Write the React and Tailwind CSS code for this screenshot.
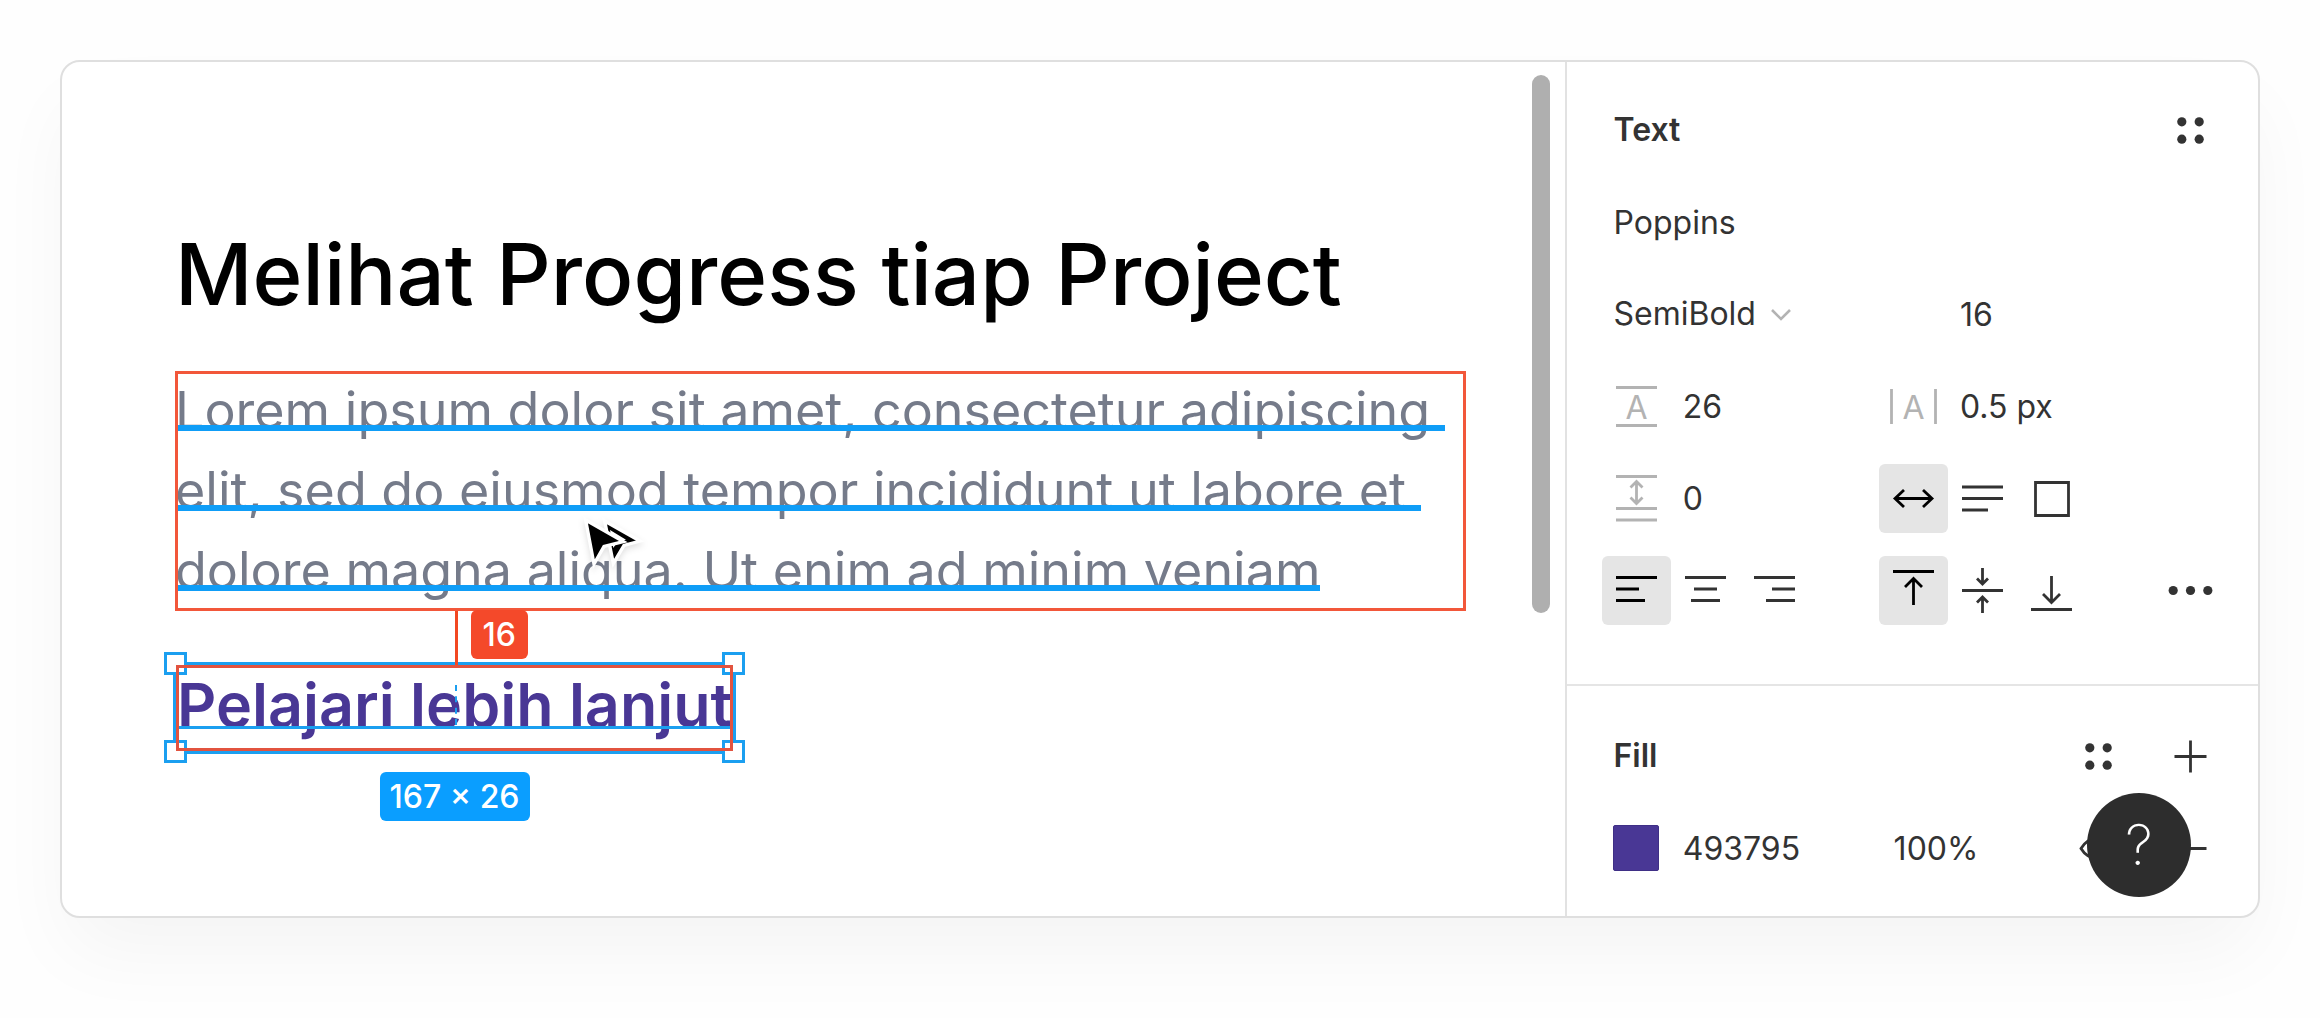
const lines = [
  'Lorem ipsum dolor sit amet, consectetur adipiscing ',
  'elit, sed do eiusmod tempor incididunt ut labore et ',
  'dolore magna aliqua. Ut enim ad minim veniam',
];

const strokes = {
  alignLeft: 'M14 21.5H55M14 33H37M14 44.5H43',
  alignCenter: 'M14 21.5H55M23 33H46M20 44.5H49',
  alignRight: 'M14 21.5H55M32 33H55M26 44.5H55',
  autoWidth: 'M16 34.5H53M25 26L16 34.5L25 43M44 26L53 34.5L44 43',
  autoHeight: 'M14 23H55M14 34.5H55M14 46H40',
  fixedSize: 'M18.5 18.5H51.5V51.5H18.5Z',
  top: 'M14 15.5H55M34.5 49V22.5M26 31L34.5 22.5L43 31',
  middle: 'M14 34.5H55M34.5 12V28M29 22.5L34.5 28L40 22.5M34.5 57V41M29 46.5L34.5 41L40 46.5',
  bottom: 'M14 53.5H55M34.5 20V46.5M26 38L34.5 46.5L43 38',
  plus: 'M18.5 34.5H50.5M34.5 18.5V50.5',
  minus: 'M18.5 34.5H50.5',
  lineHeight: 'M14 15.5H55M14 53.5H55',
  letterSpacing: 'M12.5 17V52M56.5 17V52',
  paragraphSpacing: 'M14 12.5H55M14 44.5H55M14 56H55M34.5 18V39M28.5 23.5L34.5 17.5L40.5 23.5M28.5 33.5L34.5 39.5L40.5 33.5',
};

function Icon({ name, letter }) {
  return (
    <svg viewBox="0 0 69 69" className="size-[69px] shrink-0" fill="none" stroke="currentColor" strokeWidth="2.8" aria-hidden="true">
      <path d={strokes[name]} />
      {letter && (
        <text x="34.5" y="46.5" textAnchor="middle" fill="currentColor" stroke="none" className="font-['Inter',sans-serif] text-[32px] font-normal">
          {letter}
        </text>
      )}
    </svg>
  );
}

function Dots({ points }) {
  return (
    <svg viewBox="0 0 69 69" className="size-[69px] shrink-0" fill="currentColor" aria-hidden="true">
      {points.map(([x, y]) => (
        <circle key={`${x}-${y}`} cx={x} cy={y} r="4.6" />
      ))}
    </svg>
  );
}

const gridDots = [[25.8, 25.8], [43.2, 25.8], [25.8, 43.2], [43.2, 43.2]];
const moreDots = [[17.2, 34.5], [34.5, 34.5], [51.8, 34.5]];

function IconButton({ label, active, className = '', children }) {
  return (
    <button
      type="button"
      aria-label={label}
      aria-pressed={active}
      className={`flex h-[69px] items-center justify-center rounded-md ${active ? 'bg-[#e5e5e5] text-black' : 'text-[#333333]'} ${className}`}
    >
      {children}
    </button>
  );
}

function Row({ children }) {
  return <div className="grid h-[92px] grid-cols-9 items-center">{children}</div>;
}

function Field({ label, value }) {
  return <input aria-label={label} defaultValue={value} className="h-12 w-full min-w-0 bg-transparent px-1 outline-none" />;
}

function Handle({ className }) {
  return <span className={`absolute size-[23px] border-[3px] border-[#1b9ff0] bg-white ${className}`} />;
}

function Cursor() {
  return (
    <svg viewBox="0 0 300 300" className="pointer-events-none absolute top-[428px] left-[498px] size-[100px] drop-shadow-md" aria-hidden="true">
      <path d="M134 93L240 153L192 166L160 220Z" fill="#000" stroke="#fff" strokeWidth="10" />
      <path d="M150 120L198 149L172 155L160 174Z" fill="#fff" />
      <path d="M77 90L190 155L132 169L102 222Z" fill="#000" stroke="#fff" strokeWidth="10" />
    </svg>
  );
}

function Canvas() {
  return (
    <main className="relative pt-[163px] pr-[99px] pl-[113px]">
      <h1 className="text-[85px] leading-[100px] font-medium whitespace-nowrap text-black">Melihat Progress tiap Project</h1>

      <div className="relative mt-[46px] text-[52px] leading-[80px] text-[#757b8a]">
        {lines.map((line) => (
          <div key={line}>
            <span className="relative inline-block whitespace-pre">
              {line}
              <span className="absolute inset-x-0 top-[54px] h-1.5 bg-[#0f9df7]" />
            </span>
          </div>
        ))}
        <span className="pointer-events-none absolute inset-0 border-[3px] border-[#f2573a]" />
      </div>

      <div className="relative mt-[51px] -ml-0.5 w-fit border-[3px] border-[#1b9ff0] px-px pb-1.5">
        <a href="#pelajari" className="relative block text-[61px] leading-[80px] font-semibold whitespace-nowrap text-[#493795]">
          Pelajari lebih lanjut
          <span className="absolute inset-x-0 top-[61px] h-[3px] bg-[#1b9ff0]" />
        </a>
        <span className="absolute top-5 left-1/2 h-10 border-l-2 border-dashed border-[#1b9ff0]" />
        <Handle className="-top-[13px] -left-3" />
        <Handle className="-top-[13px] -right-3" />
        <Handle className="-bottom-3 -left-3" />
        <Handle className="-right-3 -bottom-3" />
        <span className="pointer-events-none absolute inset-0 border-[3px] border-[#e2533f]" />
        <span className="absolute -top-[54px] left-1/2 h-[54px] w-[3px] bg-[#f24822]" />
        <span className="absolute -top-[55px] left-1/2 ml-4 flex h-[49px] items-center rounded-md bg-[#f4492a] px-3 text-[32px] leading-none font-medium text-white">
          16
        </span>
        <span className="absolute top-[107px] left-1/2 flex h-[49px] -translate-x-1/2 items-center rounded-md bg-[#0a9eff] px-2.5 text-[32px] leading-none font-medium whitespace-nowrap text-white">
          167 × 26
        </span>
      </div>

      <Cursor />
      <span className="absolute top-[13px] right-[15px] h-[538px] w-[18px] rounded-full bg-[#afafaf]" />
    </main>
  );
}

function TextSection() {
  return (
    <section className="border-b-2 border-[#e5e5e5] pt-[22px] pr-[33px] pb-12 pl-[35px]">
      <Row>
        <h2 className="col-span-8 pl-3 font-semibold">Text</h2>
        <IconButton label="Text styles"><Dots points={gridDots} /></IconButton>
      </Row>
      <Row>
        <div className="col-span-9 pl-2"><Field label="Font family" value="Poppins" /></div>
      </Row>
      <Row>
        <div className="relative col-span-3 flex items-center pl-2">
          <select aria-label="Font weight" defaultValue="SemiBold" className="h-12 w-full appearance-none bg-transparent px-1 outline-none">
            <option>SemiBold</option>
          </select>
          <svg viewBox="0 0 24 16" className="pointer-events-none absolute right-4 h-4 w-6 text-[#b3b3b3]" fill="none" stroke="currentColor" strokeWidth="2.6" aria-hidden="true">
            <path d="M3 4L12 13L21 4" />
          </svg>
        </div>
        <div className="col-span-3 col-start-6 pl-2"><Field label="Font size" value="16" /></div>
      </Row>
      <Row>
        <span className="flex justify-center text-[#b3b3b3]"><Icon name="lineHeight" letter="A" /></span>
        <div className="col-span-3 pl-2"><Field label="Line height" value="26" /></div>
        <span className="flex justify-center text-[#b3b3b3]"><Icon name="letterSpacing" letter="A" /></span>
        <div className="col-span-3 pl-2"><Field label="Letter spacing" value="0.5 px" /></div>
      </Row>
      <Row>
        <span className="flex justify-center text-[#b3b3b3]"><Icon name="paragraphSpacing" /></span>
        <div className="col-span-3 pl-2"><Field label="Paragraph spacing" value="0" /></div>
        <IconButton label="Auto width" active><Icon name="autoWidth" /></IconButton>
        <IconButton label="Auto height"><Icon name="autoHeight" /></IconButton>
        <IconButton label="Fixed size"><Icon name="fixedSize" /></IconButton>
      </Row>
      <Row>
        <IconButton label="Align left" active><Icon name="alignLeft" /></IconButton>
        <IconButton label="Align center"><Icon name="alignCenter" /></IconButton>
        <IconButton label="Align right"><Icon name="alignRight" /></IconButton>
        <IconButton label="Align top" active className="col-start-5"><Icon name="top" /></IconButton>
        <IconButton label="Align middle"><Icon name="middle" /></IconButton>
        <IconButton label="Align bottom"><Icon name="bottom" /></IconButton>
        <IconButton label="More options" className="col-start-9"><Dots points={moreDots} /></IconButton>
      </Row>
    </section>
  );
}

function FillSection() {
  return (
    <section className="relative pt-6 pr-[33px] pb-[22px] pl-[35px]">
      <Row>
        <h2 className="col-span-6 pl-3 font-semibold">Fill</h2>
        <div className="col-span-3 flex justify-end gap-[23px]">
          <IconButton label="Fill styles"><Dots points={gridDots} /></IconButton>
          <IconButton label="Add fill"><Icon name="plus" /></IconButton>
        </div>
      </Row>
      <Row>
        <button type="button" aria-label="Fill color" className="size-[46px] justify-self-center rounded-xs border border-[#3f2f86] bg-[#493795]" />
        <div className="col-span-3 pl-2"><Field label="Fill color hex" value="493795" /></div>
        <div className="col-span-2 pl-[11px]"><Field label="Fill opacity" value="100%" /></div>
        <div className="col-span-2 col-start-8 flex justify-end gap-[23px]">
          <IconButton label="Hide fill">
            <svg viewBox="0 0 69 69" className="size-[69px] shrink-0" fill="none" stroke="currentColor" strokeWidth="2.8" aria-hidden="true">
              <path d="M17 34.5C25 21 44 21 52 34.5C44 48 25 48 17 34.5Z" />
              <circle cx="34.5" cy="34.5" r="5" />
            </svg>
          </IconButton>
          <IconButton label="Remove fill"><Icon name="minus" /></IconButton>
        </div>
      </Row>
      <button
        type="button"
        aria-label="Help"
        className="absolute right-[67px] bottom-[19px] flex size-[104px] items-center justify-center rounded-full bg-[#2d2d2d] text-[56px] leading-none font-extralight text-white"
      >
        ?
      </button>
    </section>
  );
}

export default function App() {
  return (
    <div className="min-h-screen bg-[#fefefe] p-[60px] font-['Inter',sans-serif]">
      <div className="grid grid-cols-[13fr_6fr] rounded-[20px] border-2 border-[#dfdfdf] bg-white shadow-[0_40px_80px_-8px_rgba(0,0,0,0.045)]">
        <Canvas />
        <aside className="border-l-2 border-[#e2e2e2] text-[32px] leading-10 text-[#333333]">
          <TextSection />
          <FillSection />
        </aside>
      </div>
    </div>
  );
}
